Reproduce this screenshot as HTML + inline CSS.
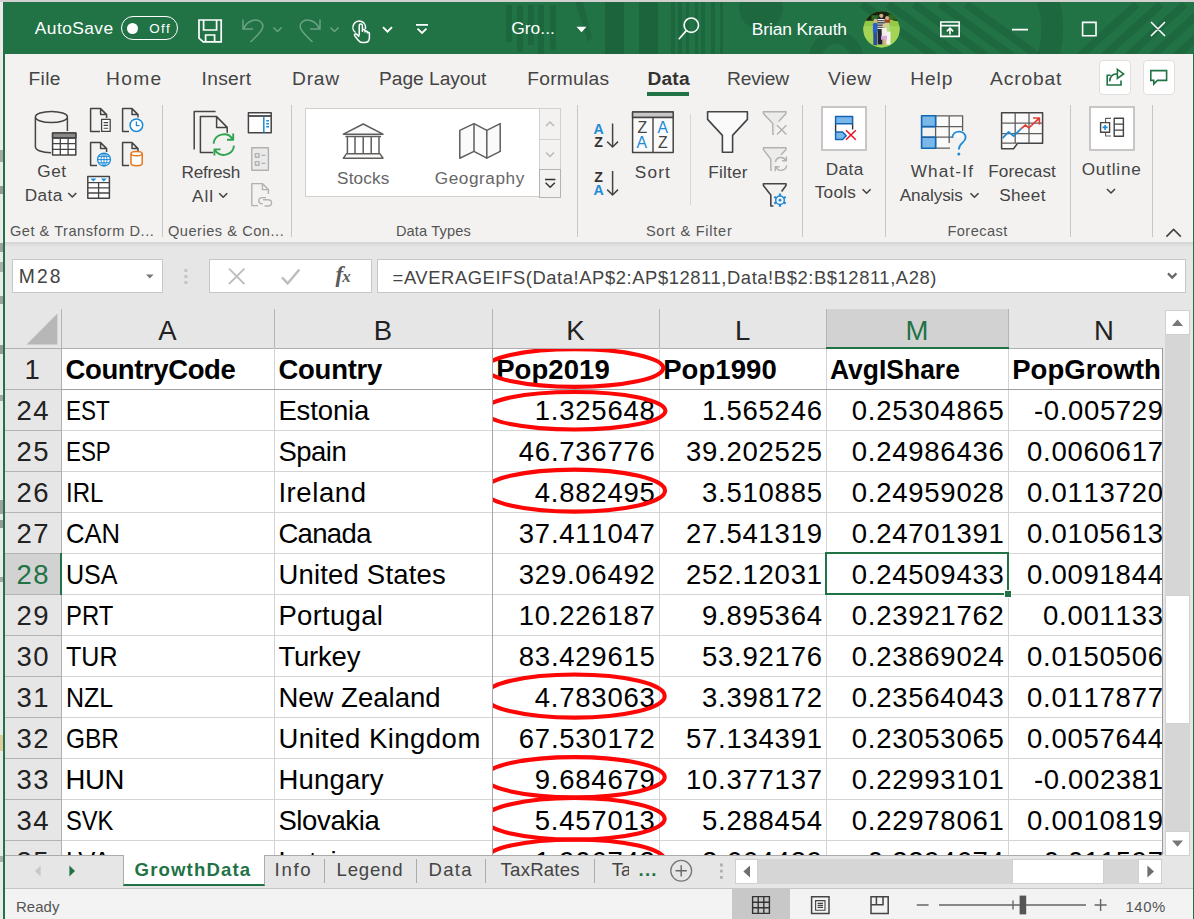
<!DOCTYPE html>
<html lang="en">
<head>
<meta charset="utf-8">
<title>GrowthData - Excel</title>
<style>
html,body{margin:0;padding:0;}
body{width:1194px;height:919px;overflow:hidden;position:relative;background:#e6e6e6;font-family:"Liberation Sans",sans-serif;}
.a{position:absolute;}
.t{position:absolute;white-space:nowrap;line-height:1;}
svg{position:absolute;overflow:visible;}
.sep{position:absolute;width:1px;background:#c8c6c4;}
.hl{position:absolute;height:1px;background:#d4d4d4;}
.vl{position:absolute;width:1px;background:#d4d4d4;}

</style>
</head>
<body>
<div class="a" style="left:0;top:0;width:1194px;height:919px;background:#ebebeb"></div>
<div class="a" style="left:0;top:0;width:1194px;height:2px;background:#d2d0d0"></div>
<div class="a" style="left:0;top:150px;width:3px;height:12px;background:#555;opacity:.45"></div>
<div class="a" style="left:0;top:186px;width:3px;height:8px;background:#333;opacity:.45"></div>
<div class="a" style="left:0;top:243px;width:3px;height:9px;background:#444;opacity:.45"></div>
<div class="a" style="left:0;top:262px;width:3px;height:10px;background:#666;opacity:.45"></div>
<div class="a" style="left:0;top:296px;width:3px;height:8px;background:#444;opacity:.45"></div>
<div class="a" style="left:0;top:345px;width:3px;height:9px;background:#333;opacity:.45"></div>
<div class="a" style="left:0;top:395px;width:3px;height:6px;background:#555;opacity:.45"></div>
<div class="a" style="left:0;top:500px;width:3px;height:14px;background:#444;opacity:.45"></div>
<div class="a" style="left:0;top:520px;width:3px;height:8px;background:#333;opacity:.45"></div>
<div class="a" style="left:0;top:577px;width:3px;height:5px;background:#555;opacity:.45"></div>
<div class="a" style="left:0;top:735px;width:3px;height:16px;background:#d9a441;opacity:.45"></div>
<div class="a" style="left:0;top:856px;width:3px;height:6px;background:#666;opacity:.45"></div>
<div class="a" style="left:3px;top:2px;width:1191px;height:917px;background:#217346"></div>
<div class="a" id="titlebar" style="left:4px;top:2px;width:1190px;height:52px;background:#217346;overflow:hidden">
<div class="a" style="left:502px;top:3px;width:6px;height:37px;background:rgba(0,0,0,0.10)"></div>
<div class="a" style="left:513px;top:3px;width:6px;height:47px;background:rgba(0,0,0,0.10)"></div>
<div class="a" style="left:524px;top:3px;width:6px;height:40px;background:rgba(0,0,0,0.10)"></div>
<div class="a" style="left:534px;top:3px;width:6px;height:49px;background:rgba(0,0,0,0.10)"></div>
<div class="a" style="left:546px;top:3px;width:6px;height:45px;background:rgba(0,0,0,0.10)"></div>
<div class="a" style="left:601px;top:-2px;width:19px;height:54px;background:rgba(0,0,0,0.13)"></div>
<div class="a" style="left:635px;top:-2px;width:19px;height:54px;background:rgba(0,0,0,0.13)"></div>
<div class="a" style="left:667px;top:-2px;width:4px;height:54px;background:rgba(0,0,0,0.10)"></div>
<div class="a" style="left:674px;top:-2px;width:4px;height:54px;background:rgba(0,0,0,0.10)"></div>
<div class="a" style="left:682px;top:-2px;width:3px;height:54px;background:rgba(0,0,0,0.10)"></div>
<div class="a" style="left:691px;top:-2px;width:3px;height:54px;background:rgba(0,0,0,0.10)"></div>
<div class="a" style="left:697px;top:-2px;width:4px;height:54px;background:rgba(0,0,0,0.10)"></div>
<div class="a" style="left:707px;top:-2px;width:4px;height:54px;background:rgba(0,0,0,0.10)"></div>
<div class="a" style="left:716px;top:-2px;width:3px;height:54px;background:rgba(0,0,0,0.10)"></div>
<svg width="1194" height="60" style="left:-4px;top:-2px" fill="none" stroke="rgba(0,0,0,0.09)">
<path d="M575,2 L583,2 L592,38 L588,42 Z" fill="rgba(0,0,0,0.09)" stroke="none"/>
<circle cx="761" cy="8" r="22" fill="rgba(0,0,0,0.09)" stroke="none"/>
<circle cx="836" cy="58" r="20.5" stroke-width="13"/>
<path d="M862,4 L934,56" stroke-width="8"/>
<path d="M888,4 L960,56" stroke-width="8"/>
<path d="M914,4 L986,56" stroke-width="8"/>
<path d="M940,4 L1012,56" stroke-width="8"/>
<path d="M966,4 L1038,56" stroke-width="8"/>
<path d="M1034,-26 A92,92 0 0 1 1034,84" stroke-width="22"/>
<path d="M1080,56 L1137,4" stroke-width="8"/>
<path d="M1104,56 L1161,4" stroke-width="8"/>
<path d="M1128,56 L1185,4" stroke-width="8"/>
<path d="M1152,56 L1209,4" stroke-width="8"/>
<path d="M1176,56 L1233,4" stroke-width="8"/>
<path d="M1200,56 L1257,4" stroke-width="8"/>
</svg>
</div>
<div class="t" style="left:34.8px;top:20.0px;font-size:17.4px;color:#fff;letter-spacing:0.41px;">AutoSave</div>
<div class="a" style="left:121px;top:16px;width:55px;height:22px;border:1px solid #fff;border-radius:12px"></div>
<div class="a" style="left:127px;top:23px;width:11px;height:11px;border-radius:6px;background:#fff"></div>
<div class="t" style="left:149.2px;top:21.5px;font-size:13.4px;color:#fff;letter-spacing:1.51px;">Off</div>
<div class="t" style="left:511.2px;top:19.9px;font-size:17.4px;color:#fff;letter-spacing:0.03px;">Gro...</div>
<div class="t" style="left:751.8px;top:21.1px;font-size:17.4px;color:#fff;letter-spacing:-0.13px;">Brian Krauth</div>
<div class="a" style="left:5px;top:54px;width:1188px;height:188px;background:#f3f2f1"></div>
<div class="a" style="left:5px;top:242px;width:1188px;height:5px;background:linear-gradient(#d2d2d2,#e6e6e6)"></div>
<div class="t" style="left:28.6px;top:68.8px;font-size:19.2px;color:#444;letter-spacing:0.29px;">File</div>
<div class="t" style="left:106.1px;top:68.8px;font-size:19.2px;color:#444;letter-spacing:1.27px;">Home</div>
<div class="t" style="left:201.6px;top:68.8px;font-size:19.2px;color:#444;letter-spacing:0.30px;">Insert</div>
<div class="t" style="left:292.1px;top:68.8px;font-size:19.2px;color:#444;letter-spacing:0.74px;">Draw</div>
<div class="t" style="left:379.0px;top:68.8px;font-size:19.2px;color:#444;letter-spacing:-0.03px;">Page Layout</div>
<div class="t" style="left:527.2px;top:68.8px;font-size:19.2px;color:#444;letter-spacing:0.28px;">Formulas</div>
<div class="t" style="left:727.0px;top:68.8px;font-size:19.2px;color:#444;letter-spacing:-0.17px;">Review</div>
<div class="t" style="left:828.0px;top:68.8px;font-size:19.2px;color:#444;letter-spacing:0.62px;">View</div>
<div class="t" style="left:910.2px;top:68.8px;font-size:19.2px;color:#444;letter-spacing:0.91px;">Help</div>
<div class="t" style="left:990.1px;top:68.8px;font-size:19.2px;color:#444;letter-spacing:0.86px;">Acrobat</div>
<div class="t" style="left:647.4px;top:68.8px;font-size:19.2px;color:#333;font-weight:700;letter-spacing:0.20px;">Data</div>
<div class="a" style="left:647px;top:92px;width:42px;height:4px;background:#217346"></div>
<svg width="1194" height="919" style="left:0;top:0" fill="none" stroke="#fff" stroke-width="1.7">
<path d="M199,20 H221.2 V41.8 H203.2 L199,38.2 Z M203.6,20 V30 H216.6 V20 M205.6,41.8 V35 H214.6 V41.8"/>
<g stroke="#6aa384" stroke-width="1.5"><path d="M243,19.5 V29 H253 M243.6,28.6 C247,21 256,17.5 261,22 C265.5,26.5 262,31 250.5,42"/><path d="M273.5,27.5 L277.5,31.5 L281.5,27.5"/>
<path d="M320,19.5 V29 H310 M319.4,28.6 C316,21 307,17.5 302,22 C297.5,26.5 301,31 312.5,42"/><path d="M330.5,27.5 L334.5,31.5 L338.5,27.5"/></g>
<path d="M355.5,32.5 A6.3,6.3 0 1 1 365.3,29 M359.2,35.5 V25.6 A1.6,1.6 0 0 1 362.4,25.6 V32 M362.4,30.2 A1.4,1.4 0 0 1 365,30.6 V32.6 M365,31.4 A1.4,1.4 0 0 1 367.4,32 V33.4 M367.4,32.6 A1.3,1.3 0 0 1 369.4,33.4 V37.5 C369.4,40.5 367.5,42.6 364.5,42.6 H362.6 C360.5,42.6 359.3,41.8 358,40 L354.6,35.6 C354,34.4 355.6,33.2 356.8,34.4 L359.2,36.8" stroke-width="1.5"/>
<path d="M383,27.2 L387.5,31.7 L392,27.2" stroke-width="1.8"/>
<path d="M416,24.8 H428 M417.5,28.6 L422,33 L426.5,28.6" stroke-width="1.8"/>
<path d="M576.5,26.8 H586.5 L581.5,32.2 Z" fill="#fff" stroke="none"/>
<circle cx="691.3" cy="25.2" r="7.2" stroke-width="1.6"/><path d="M686.3,30.6 L678.8,39.2" stroke-width="1.6"/>
<path d="M940.8,22 H959.2 V36.4 H940.8 Z M940.8,25.6 H959.2 M950,34.4 V28.6 M946.8,31.4 L950,28.2 L953.2,31.4" stroke-width="1.6"/>
<path d="M1012,29.6 H1028 M1082.6,22.4 H1096 V35.8 H1082.6 Z M1151,22 L1165,36 M1165,22 L1151,36" stroke-width="1.6"/>
</svg>
<svg width="37" height="37" viewBox="862.5 10.8 37 37" style="left:862.5px;top:10.8px">
<defs><clipPath id="avc"><circle cx="881" cy="29.1" r="18.1"/></clipPath></defs>
<g clip-path="url(#avc)">
<rect x="862" y="10" width="38" height="38" fill="#93c947"/>
<rect x="862" y="26" width="38" height="22" fill="#a3d455"/>
<path d="M862,10 H900 V21.5 L893,20.4 L889,18 L872,20.6 H862 Z" fill="#16240f"/>
<path d="M871,15 h7 v4.6 h-7 z M888,14 h8 v5.5 h-8 z" fill="#2f6b22"/>
<rect x="872.4" y="22.8" width="4.8" height="10.5" rx="1.5" fill="#2b5fd0"/><rect x="872.8" y="32.5" width="4" height="12.5" fill="#2f4d9a"/><circle cx="875" cy="20.6" r="2" fill="#d9b08c"/>
<rect x="877" y="17.6" width="7" height="13" fill="#20242c"/><path d="M877,19.4 h7 M877,21.6 h7 M877,23.8 h7 M877,26 h7 M877,28.2 h7" stroke="#f2f2f2" stroke-width="1.1"/><rect x="877.4" y="30.4" width="5.6" height="13.8" fill="#1c2233"/><circle cx="880.8" cy="15.6" r="2.1" fill="#d8a98a"/>
<rect x="884.4" y="18.4" width="5" height="6" fill="#a4402c"/><circle cx="886.6" cy="17.8" r="2" fill="#d9a98c"/><rect x="884.6" y="22.6" width="4.6" height="9" fill="#b5dc8a"/><rect x="885" y="31.4" width="5" height="13" fill="#f4f4f4"/>
<rect x="881.2" y="27.2" width="5.2" height="9.4" rx="1.5" fill="#f3efe8"/><rect x="880.6" y="35.6" width="5.8" height="4" fill="#dfa6dc"/><circle cx="884" cy="25.4" r="2" fill="#e6c890"/><rect x="881.8" y="39.4" width="1.6" height="5.4" fill="#d8b08c"/><rect x="884.2" y="39.4" width="1.6" height="5.4" fill="#d8b08c"/>
</g></svg>
<div class="a" style="left:1099px;top:60px;width:30px;height:33px;background:#fff;border:1px solid #e1dfdd;border-radius:4px"></div>
<div class="a" style="left:1143px;top:60px;width:30px;height:33px;background:#fff;border:1px solid #e1dfdd;border-radius:4px"></div>
<svg width="1194" height="919" style="left:0;top:0" fill="none" stroke="#217346" stroke-width="1.6">
<path d="M1110.6,75.2 H1107.2 V85 H1121 V80.6 M1109.6,81.4 C1110,76.6 1113,73.8 1117.4,73.8 M1117.4,69.4 L1123.6,73.9 L1117.4,78.4 Z"/>
<path d="M1150.8,70.6 H1166.6 V80.4 H1157.4 L1153.8,84 V80.4 H1150.8 Z"/>
</svg>
<div class="sep" style="left:162px;top:105px;height:132px"></div>
<div class="sep" style="left:291px;top:105px;height:132px"></div>
<div class="sep" style="left:577px;top:105px;height:132px"></div>
<div class="sep" style="left:802px;top:105px;height:132px"></div>
<div class="sep" style="left:885px;top:105px;height:132px"></div>
<div class="sep" style="left:1070px;top:105px;height:132px"></div>
<div class="sep" style="left:1152px;top:105px;height:132px"></div>
<div class="sep" style="left:690px;top:114px;height:91px;background:#d8d6d4"></div>
<div class="t" style="left:9.9px;top:224.4px;font-size:14.6px;color:#555;letter-spacing:0.53px;">Get &amp; Transform D...</div>
<div class="t" style="left:167.9px;top:224.4px;font-size:14.6px;color:#555;letter-spacing:0.53px;">Queries &amp; Con...</div>
<div class="t" style="left:395.9px;top:224.4px;font-size:14.6px;color:#555;letter-spacing:0.15px;">Data Types</div>
<div class="t" style="left:645.9px;top:224.4px;font-size:14.6px;color:#555;letter-spacing:0.74px;">Sort &amp; Filter</div>
<div class="t" style="left:947.4px;top:224.4px;font-size:14.6px;color:#555;letter-spacing:0.45px;">Forecast</div>
<div class="a" style="left:305px;top:108px;width:256px;height:89px;background:#fff;border:1px solid #d2d0ce;box-sizing:border-box"></div>
<div class="a" style="left:539px;top:108px;width:22px;height:32px;background:#f3f2f1;border:1px solid #d2d0ce;box-sizing:border-box"></div>
<div class="a" style="left:539px;top:139px;width:22px;height:31px;background:#f3f2f1;border:1px solid #d2d0ce;box-sizing:border-box"></div>
<div class="a" style="left:539px;top:169px;width:22px;height:29px;background:#f3f2f1;border:1px solid #b5b3b1;box-sizing:border-box"></div>
<div class="a" style="left:821px;top:106px;width:46px;height:45px;background:#fff;border:2px solid #c8c6c4;box-sizing:border-box"></div>
<div class="a" style="left:1089px;top:106px;width:46px;height:45px;background:#fff;border:2px solid #c8c6c4;box-sizing:border-box"></div>
<div class="t" style="left:37.3px;top:163.0px;font-size:17.2px;color:#444;letter-spacing:0.47px;">Get</div>
<div class="t" style="left:24.7px;top:187.2px;font-size:17.2px;color:#444;letter-spacing:0.44px;">Data</div>
<div class="t" style="left:181.6px;top:163.8px;font-size:17.2px;color:#444;letter-spacing:-0.26px;">Refresh</div>
<div class="t" style="left:192.0px;top:187.8px;font-size:17.2px;color:#444;letter-spacing:1.01px;">All</div>
<div class="t" style="left:337.1px;top:169.5px;font-size:17.2px;color:#666;letter-spacing:0.11px;">Stocks</div>
<div class="t" style="left:434.8px;top:169.5px;font-size:17.2px;color:#666;letter-spacing:0.56px;">Geography</div>
<div class="t" style="left:634.7px;top:163.6px;font-size:17.2px;color:#444;letter-spacing:1.23px;">Sort</div>
<div class="t" style="left:708.2px;top:163.6px;font-size:17.2px;color:#444;letter-spacing:0.21px;">Filter</div>
<div class="t" style="left:825.7px;top:160.6px;font-size:17.2px;color:#444;letter-spacing:0.47px;">Data</div>
<div class="t" style="left:814.7px;top:184.4px;font-size:17.2px;color:#444;letter-spacing:0.28px;">Tools</div>
<div class="t" style="left:910.7px;top:162.9px;font-size:17.2px;color:#444;letter-spacing:1.14px;">What-If</div>
<div class="t" style="left:899.7px;top:187.0px;font-size:17.2px;color:#444;letter-spacing:-0.11px;">Analysis</div>
<div class="t" style="left:988.2px;top:162.9px;font-size:17.2px;color:#444;letter-spacing:0.12px;">Forecast</div>
<div class="t" style="left:999.2px;top:187.0px;font-size:17.2px;color:#444;letter-spacing:0.33px;">Sheet</div>
<div class="t" style="left:1081.7px;top:160.6px;font-size:17.2px;color:#444;letter-spacing:0.79px;">Outline</div>
<svg width="1194" height="919" style="left:0;top:0" fill="none" stroke="#444" stroke-width="1.5" stroke-linejoin="round">
<path d="M68.3,193.0 L72.3,197.0 L76.3,193.0" stroke="#444" stroke-width="1.6"/>
<path d="M219.2,193.2 L223.2,197.2 L227.2,193.2" stroke="#444" stroke-width="1.6"/>
<path d="M862.6,189.2 L866.6,193.2 L870.6,189.2" stroke="#444" stroke-width="1.6"/>
<path d="M970.5,193.2 L974.5,197.2 L978.5,193.2" stroke="#444" stroke-width="1.6"/>
<path d="M1107.0,189.0 L1111.0,193.0 L1115.0,189.0" stroke="#444" stroke-width="1.6"/>
<path d="M35.4,117 A16,5.6 0 0 1 67.4,117 A16,5.6 0 0 1 35.4,117 M35.4,117 V147 C35.4,150 42,152.6 51,152.8 M67.4,117 V131"/>
<rect x="52.6" y="133" width="23.2" height="22" fill="#fff"/><rect x="52.6" y="133" width="23.2" height="5" fill="#8a8886"/>
<path d="M52.6,138 H75.8 M52.6,143.7 H75.8 M52.6,149.4 H75.8 M60.3,138 V155 M68.1,138 V155" stroke-width="1.3"/>
<path d="M100.0,131.6 H90.6 V108.6 H100.6 L106.6,114.6 V118.0 M100.6,108.6 V114.6 H106.6" stroke="#444"/>
<rect x="101.6" y="119.4" width="8.6" height="12" fill="#fff" stroke-width="1.3"/><path d="M103.6,122.6 H108.2 M103.6,125.4 H108.2 M103.6,128.2 H108.2" stroke-width="1.1"/>
<path d="M129.0,131.6 H122.6 V108.6 H132.0 L138.0,114.6 V117.5 M132.0,108.6 V114.6 H138.0" stroke="#444"/>
<circle cx="136.4" cy="125.2" r="6.3" fill="#fff" stroke="#1e8ad6" stroke-width="1.5"/><path d="M136.4,121.4 V125.6 H139.6" stroke="#1e8ad6" stroke-width="1.3"/>
<path d="M97.0,165.6 H90.6 V142.6 H100.6 L106.6,148.6 V152.0 M100.6,142.6 V148.6 H106.6" stroke="#444"/>
<circle cx="104" cy="159.6" r="6.4" fill="#fff" stroke="#1e8ad6" stroke-width="1.4"/><path d="M97.6,159.6 H110.4 M104,153.2 V166 M104,153.2 C100,156.5 100,162.8 104,166 M104,153.2 C108,156.5 108,162.8 104,166 M98.6,156.4 H109.4 M98.6,162.8 H109.4" stroke="#1e8ad6" stroke-width="1"/>
<path d="M129.0,165.6 H122.6 V142.6 H132.0 L138.0,148.6 V152.0 M132.0,142.6 V148.6 H138.0" stroke="#444"/>
<path d="M131,153.6 A5.6,2.2 0 0 1 142.2,153.6 V163.6 A5.6,2.2 0 0 1 131,163.6 Z" fill="#fff" stroke="#e3771d" stroke-width="1.5"/><path d="M131,153.6 A5.6,2.2 0 0 0 142.2,153.6" stroke="#e3771d" stroke-width="1.4"/>
<rect x="87.8" y="176.6" width="21.6" height="21.6" fill="#fff"/><path d="M87.8,182.6 H109.4 M87.8,187.8 H109.4 M87.8,193 H109.4 M98.6,182.6 V198.2" stroke-width="1.3"/>
<path d="M90.4,178.4 H96.4 L93.4,181.4 Z M100.8,178.4 H106.8 L103.8,181.4 Z" fill="#1e8ad6" stroke="none"/>
<path d="M194.2,149.6 V111.4 H215.6"/>
<path d="M213,152.6 H200.4 V116.6 H216.6 L227.2,127.4 V133 M216.6,116.6 V127.4 H227.2"/>
<circle cx="223.8" cy="144.6" r="12.4" fill="#f3f2f1" stroke="none"/>
<path d="M213.6,143.6 A10.3,10.3 0 0 1 232.6,139.2 M234,145.6 A10.3,10.3 0 0 1 215,150 M233.2,133.6 V139.8 H227 M214.4,155.6 V149.4 H220.6" stroke="#2ea44f" stroke-width="1.9"/>
<rect x="248.4" y="112.8" width="22.8" height="20" fill="#fff"/><path d="M248.4,116 H271.2" stroke-width="1.8"/><path d="M263.8,116.6 V132.4" stroke="#1e8ad6" stroke-width="1.5"/><path d="M266.2,120.8 H269 M266.2,123.8 H269 M266.2,126.8 H269" stroke="#1e8ad6" stroke-width="1.5"/>
<g stroke="#b3b1af" stroke-width="1.4"><rect x="251.8" y="147.8" width="16.6" height="22.4" fill="#eaeaea"/><rect x="255.4" y="153.6" width="3.6" height="3.6"/><rect x="255.4" y="161.6" width="3.6" height="3.6"/><path d="M261.4,155.4 H265.4 M261.4,163.4 H265.4"/></g>
<g stroke="#b3b1af" stroke-width="1.4"><path d="M258,205.6 H251.8 V183.6 H262.4 L268.4,189.6 V194 M262.4,183.6 V189.6 H268.4"/><path d="M262.6,203.8 C257.6,203.8 257.6,197.6 262.6,197.6 H266 M267.6,199.8 H263 M264.6,206 H267.8 C272.8,206 272.8,199.8 267.8,199.8" /></g>
</svg>
<svg width="1194" height="919" style="left:0;top:0" fill="none" stroke="#444" stroke-width="1.5" stroke-linejoin="round">
<g stroke="#605e5c"><path d="M343.4,134.2 L363.2,124 L383,134.2 Z M345.4,136.6 H381 M347.4,136.6 V153.8 M355,136.6 V153.8 M363.2,136.6 V153.8 M371.2,136.6 V153.8 M379,136.6 V153.8 M346.4,153.8 H380 L383,158.2 H343.4 Z" fill="#fafafa"/></g>
<g stroke="#605e5c"><path d="M459.8,130.4 L474,123.6 L486.8,130.4 L500.2,123.6 V151.4 L486.8,158.2 L474,151.4 L459.8,158.2 Z" fill="#fafafa"/><path d="M474,123.6 V151.4 M486.8,130.4 V158.2"/></g>
<path d="M546,126 L550,122 L554,126 M546,152.6 L550,156.6 L554,152.6" stroke="#b8b6b4" stroke-width="1.4"/>
<path d="M545,179.4 H555.4 M545.6,182.8 L550.2,187.2 L554.8,182.8" stroke="#333" stroke-width="1.5"/>
<path d="M612.6,123.6 V147 M607.2,141.6 L612.6,147 L618,141.6 M612.6,171 V195 M607.2,189.6 L612.6,195 L618,189.6" stroke-width="1.5"/>
<rect x="632.6" y="112" width="40.6" height="40.4" fill="#fafafa"/><rect x="632.6" y="112" width="40.6" height="5.4" fill="#c8c6c4"/><path d="M653,117.4 V152.4 M632.6,117.4 H673.2" stroke-width="1.4"/>
<path d="M707.6,111.8 H747.4 V119.4 L732.6,135.4 V152.2 H722.4 V135.4 L707.6,119.4 Z" fill="#fafafa" stroke-width="1.6"/>
<g stroke="#b3b1af" stroke-width="1.4"><path d="M774,134.2 H772.8 V123.4 L763.4,113.6 V111.8 H786 V113.6 L778.6,121.4" fill="#ececeb"/><path d="M777,125.2 L786.4,134.4 M786.4,125.2 L777,134.4"/></g>
<g stroke="#b3b1af" stroke-width="1.4"><path d="M772,170 H770.8 V159.2 L763.4,149.6 V147.8 H786 V149.6 L781,155" fill="#ececeb"/><path d="M775.4,162 A5.6,5.6 0 0 1 785.8,160.4 M786.6,165.4 A5.6,5.6 0 0 1 776,167.2 M786.4,156.4 V160.8 H782 M775.2,171.2 V166.8 H779.6"/></g>
<path d="M773.4,206 H770.8 V195 L763.4,185.6 V183.8 H786 V185.6 L781.6,191.4" stroke-width="1.6"/>
<g stroke="#1e8ad6" stroke-width="1.5"><circle cx="780" cy="200.2" r="4.3"/><path d="M780,193.6 V195.8 M780,204.6 V206.8 M774.3,196.9 L776.2,198 M783.8,202.4 L785.7,203.5 M774.3,203.5 L776.2,202.4 M783.8,198 L785.7,196.9" stroke-width="2.2"/><circle cx="780" cy="200.2" r="1.4" fill="#1e8ad6" stroke="none"/></g>
<path d="M835.6,123.8 V132 M852.6,123.8 V129.4" stroke="#333" stroke-width="1.4"/>
<rect x="835.6" y="116.4" width="17" height="7.4" fill="#7ab8ea" stroke="#1464b4" stroke-width="1.5"/>
<path d="M835.6,132 H842.6 L846.2,135.7 L842.6,139.4 H835.6 Z" fill="#7ab8ea" stroke="#1464b4" stroke-width="1.5"/>
<path d="M846,130.2 L855.8,139.8 M855.8,130.2 L846,139.8" stroke="#e81123" stroke-width="1.5"/>
<path d="M935.6,115.8 H962.6 V137.2 H949.2 V148.2 H935.6 Z" fill="#fafafa" stroke="none"/>
<path d="M935.6,115.8 H962.6 V131 M921.6,126.6 H962.6 M921.6,137.2 H953 M935.6,148.2 H950 M935.6,115.8 V148.2 M949.2,115.8 V143" stroke="#605e5c" stroke-width="1.3" fill="none"/>
<path d="M921.6,126.6 V137.2" stroke="#1464b4" stroke-width="1.6"/>
<rect x="921.6" y="115.8" width="14" height="10.8" fill="#7ab8ea" stroke="#1464b4" stroke-width="1.6"/><rect x="921.6" y="137.2" width="14" height="11" fill="#7ab8ea" stroke="#1464b4" stroke-width="1.6"/>
<path d="M952.4,138 C952.4,129.6 965.6,129.8 965.6,137.4 C965.6,142.8 958.8,142.6 958.8,149.6" stroke="#1e8ad6" stroke-width="1.8"/><circle cx="958.8" cy="154" r="1.5" fill="#1e8ad6" stroke="none"/>
<path d="M1001.6,112.8 H1042.6 V143.2 H1017.6 L1013.6,148.8 H1001.6 Z" fill="#fafafa" stroke-width="1.5"/><path d="M1001.6,123.2 H1042.6 M1001.6,133.6 H1042.6 M1001.6,143.2 H1017.6 M1015.2,112.8 V143.2 M1029,112.8 V143.2" stroke="#605e5c" stroke-width="1.3"/>
<path d="M1002.6,138.2 L1008.6,131.8 L1013.6,136.2 L1021.2,128.6" stroke="#1e8ad6" stroke-width="1.7"/>
<path d="M1021.2,128.6 L1025.6,125 L1028.8,128 L1039,118.4 M1033,118 H1039.4 V124.4" stroke="#e03c32" stroke-width="1.7"/>
<path d="M1111,118.4 H1105.6 V122.4 M1105.6,132.4 V136 H1111" stroke="#605e5c" stroke-width="1.1"/>
<rect x="1100.6" y="122.6" width="9" height="9.6" fill="#fff" stroke-width="1.4"/><path d="M1102.6,127.4 H1107.6 M1105.1,124.9 V129.9" stroke="#1e8ad6" stroke-width="1.6"/>
<rect x="1114.2" y="118.2" width="9.2" height="18" fill="#fff" stroke-width="1.4"/><path d="M1114.2,124.2 H1123.4 M1114.2,130.2 H1123.4" stroke-width="1.3"/>
<path d="M1166.4,236.6 L1173.6,229.4 L1180.8,236.6" stroke-width="1.6"/>
</svg>
<div class="t" style="left:593.6px;top:121.7px;font-size:14.2px;font-weight:700;color:#1e8ad6">A</div>
<div class="t" style="left:594.2px;top:134.7px;font-size:14.2px;font-weight:700;color:#333">Z</div>
<div class="t" style="left:594.2px;top:169.5px;font-size:14.2px;font-weight:700;color:#333">Z</div>
<div class="t" style="left:593.6px;top:183.1px;font-size:14.2px;font-weight:700;color:#1e8ad6">A</div>
<div class="t" style="left:637.6px;top:119.9px;font-size:15.8px;font-weight:400;color:#444">Z</div>
<div class="t" style="left:636.4px;top:135.3px;font-size:15.8px;font-weight:400;color:#1e8ad6">A</div>
<div class="t" style="left:657.4px;top:119.9px;font-size:15.8px;font-weight:400;color:#1e8ad6">A</div>
<div class="t" style="left:658.0px;top:135.3px;font-size:15.8px;font-weight:400;color:#444">Z</div>
<div class="a" style="left:5px;top:247px;width:1188px;height:642px;background:#e6e6e6"></div>
<div class="a" style="left:12px;top:259px;width:151px;height:34px;background:#fff;border:1px solid #c6c6c6;box-sizing:border-box"></div>
<div class="t" style="left:18.7px;top:267.4px;font-size:19.3px;color:#444;letter-spacing:2.20px;">M28</div>
<div class="a" style="left:209px;top:259px;width:163px;height:34px;background:#fff;border:1px solid #c6c6c6;box-sizing:border-box"></div>
<div class="a" style="left:377px;top:259px;width:809px;height:34px;background:#fff;border:1px solid #c6c6c6;box-sizing:border-box"></div>
<div class="t" style="left:392.6px;top:268.6px;font-size:18.4px;color:#444;letter-spacing:0.57px;">=AVERAGEIFS(Data!AP$2:AP$12811,Data!B$2:B$12811,A28)</div>
<svg width="1194" height="919" style="left:0;top:0" fill="none" stroke="#bdbdbd" stroke-width="1.8">
<path d="M146,274.4 H153.6 L149.8,278.6 Z" fill="#777" stroke="none"/>
<path d="M184.4,269 h3 v3 h-3 z M184.4,275 h3 v3 h-3 z M184.4,281 h3 v3 h-3 z" fill="#c4c4c4" stroke="none"/>
<path d="M229,268.6 L244.4,284 M244.4,268.6 L229,284"/>
<path d="M282,277.4 L287.6,283.4 L299.4,269.4" stroke-width="2.4"/>
<path d="M1168,273.4 L1172.2,277.6 L1176.4,273.4" stroke="#666" stroke-width="2.2"/>
</svg>
<div class="t" style="left:335.5px;top:263px;font-size:23px;font-style:italic;font-weight:700;font-family:&quot;Liberation Serif&quot;,serif;color:#5a5a5a;letter-spacing:-1px"><i>f</i><span style="font-size:17px">x</span></div>
<div class="a" id="cells" style="left:61px;top:348px;width:1101px;height:508px;background:#fff;overflow:hidden">
</div>
<div class="a" style="left:826px;top:309px;width:183px;height:39px;background:#d2d2d2"></div>
<div class="a" style="left:5px;top:553px;width:56px;height:41px;background:#d2d2d2"></div>
<div class="hl" style="left:5px;top:348px;width:1157px;background:#b0b0b0"></div>
<div class="hl" style="left:5px;top:389px;width:1157px;background:#a6a6a6"></div>
<div class="hl" style="left:5px;top:389px;width:56px;background:#b4b4b4"></div>
<div class="hl" style="left:5px;top:430px;width:1157px;background:#d4d4d4"></div>
<div class="hl" style="left:5px;top:430px;width:56px;background:#b4b4b4"></div>
<div class="hl" style="left:5px;top:471px;width:1157px;background:#d4d4d4"></div>
<div class="hl" style="left:5px;top:471px;width:56px;background:#b4b4b4"></div>
<div class="hl" style="left:5px;top:512px;width:1157px;background:#d4d4d4"></div>
<div class="hl" style="left:5px;top:512px;width:56px;background:#b4b4b4"></div>
<div class="hl" style="left:5px;top:553px;width:1157px;background:#d4d4d4"></div>
<div class="hl" style="left:5px;top:553px;width:56px;background:#b4b4b4"></div>
<div class="hl" style="left:5px;top:594px;width:1157px;background:#d4d4d4"></div>
<div class="hl" style="left:5px;top:594px;width:56px;background:#b4b4b4"></div>
<div class="hl" style="left:5px;top:635px;width:1157px;background:#d4d4d4"></div>
<div class="hl" style="left:5px;top:635px;width:56px;background:#b4b4b4"></div>
<div class="hl" style="left:5px;top:676px;width:1157px;background:#d4d4d4"></div>
<div class="hl" style="left:5px;top:676px;width:56px;background:#b4b4b4"></div>
<div class="hl" style="left:5px;top:717px;width:1157px;background:#d4d4d4"></div>
<div class="hl" style="left:5px;top:717px;width:56px;background:#b4b4b4"></div>
<div class="hl" style="left:5px;top:758px;width:1157px;background:#d4d4d4"></div>
<div class="hl" style="left:5px;top:758px;width:56px;background:#b4b4b4"></div>
<div class="hl" style="left:5px;top:799px;width:1157px;background:#d4d4d4"></div>
<div class="hl" style="left:5px;top:799px;width:56px;background:#b4b4b4"></div>
<div class="hl" style="left:5px;top:840px;width:1157px;background:#d4d4d4"></div>
<div class="hl" style="left:5px;top:840px;width:56px;background:#b4b4b4"></div>
<div class="vl" style="left:61px;top:348px;height:507px;background:#b0b0b0"></div>
<div class="vl" style="left:61px;top:309px;height:39px;background:#b4b4b4"></div>
<div class="vl" style="left:274px;top:348px;height:507px;background:#d4d4d4"></div>
<div class="vl" style="left:274px;top:309px;height:39px;background:#b4b4b4"></div>
<div class="vl" style="left:492px;top:348px;height:507px;background:#a6a6a6"></div>
<div class="vl" style="left:492px;top:309px;height:39px;background:#b4b4b4"></div>
<div class="vl" style="left:659px;top:348px;height:507px;background:#d4d4d4"></div>
<div class="vl" style="left:659px;top:309px;height:39px;background:#b4b4b4"></div>
<div class="vl" style="left:826px;top:348px;height:507px;background:#d4d4d4"></div>
<div class="vl" style="left:826px;top:309px;height:39px;background:#b4b4b4"></div>
<div class="vl" style="left:1008px;top:348px;height:507px;background:#d4d4d4"></div>
<div class="vl" style="left:1008px;top:309px;height:39px;background:#b4b4b4"></div>
<div class="vl" style="left:1162px;top:348px;height:507px;background:#9a9a9a"></div>
<div class="a" style="left:826px;top:347px;width:183px;height:2px;background:#217346"></div>
<div class="a" style="left:60px;top:553px;width:2px;height:42px;background:#217346"></div>
<svg width="1194" height="919" style="left:0;top:0"><path d="M57.4,313.6 V344.4 H26.6 Z" fill="#b7b7b7"/></svg>
<div class="t" style="left:158.3px;top:316.9px;font-size:27.5px;color:#222;">A</div>
<div class="t" style="left:373.8px;top:316.9px;font-size:27.5px;color:#222;">B</div>
<div class="t" style="left:566.3px;top:316.9px;font-size:27.5px;color:#222;">K</div>
<div class="t" style="left:734.9px;top:316.9px;font-size:27.5px;color:#222;">L</div>
<div class="t" style="left:905.5px;top:316.9px;font-size:27.5px;color:#217346;">M</div>
<div class="t" style="left:1094.1px;top:316.9px;font-size:27.5px;color:#222;">N</div>
<div class="a" style="left:0;top:300px;width:1162px;height:555px;overflow:hidden"><div class="a" style="left:0;top:-300px;width:1194px;height:919px">
<div class="t" style="left:24.6px;top:356.2px;font-size:27.5px;color:#222;">1</div>
<div class="t" style="left:65.6px;top:356.2px;font-size:27.5px;color:#000;font-weight:700;letter-spacing:-0.40px;">CountryCode</div>
<div class="t" style="left:278.4px;top:356.2px;font-size:27.5px;color:#000;font-weight:700;letter-spacing:-0.24px;">Country</div>
<div class="t" style="left:496.2px;top:356.2px;font-size:27.5px;color:#000;font-weight:700;letter-spacing:0.08px;">Pop2019</div>
<div class="t" style="left:663.2px;top:356.2px;font-size:27.5px;color:#000;font-weight:700;letter-spacing:0.08px;">Pop1990</div>
<div class="t" style="left:830.2px;top:356.2px;font-size:27.5px;color:#000;font-weight:700;transform:scaleX(0.962);transform-origin:0 0;">AvgIShare</div>
<div class="t" style="left:1012.2px;top:356.2px;font-size:27.5px;color:#000;font-weight:700;letter-spacing:0.07px;">PopGrowth</div>
<div class="t" style="left:16.6px;top:397.2px;font-size:27.5px;color:#222;letter-spacing:1.41px;">24</div>
<div class="t" style="left:65.6px;top:397.2px;font-size:27.5px;color:#000;transform:scaleX(0.817);transform-origin:0 0;">EST</div>
<div class="t" style="left:278.4px;top:397.2px;font-size:27.5px;color:#000;letter-spacing:-0.12px;">Estonia</div>
<div class="t" style="left:534.8px;top:397.2px;font-size:27.5px;color:#000;letter-spacing:0.76px;font-kerning:none;">1.325648</div>
<div class="t" style="left:702.0px;top:397.2px;font-size:27.5px;color:#000;letter-spacing:0.76px;font-kerning:none;">1.565246</div>
<div class="t" style="left:851.8px;top:397.2px;font-size:27.5px;color:#000;letter-spacing:0.74px;font-kerning:none;">0.25304865</div>
<div class="t" style="left:1034.0px;top:397.2px;font-size:27.5px;color:#000;letter-spacing:0.64px;font-kerning:none;">-0.005729</div>
<div class="t" style="left:16.6px;top:438.2px;font-size:27.5px;color:#222;letter-spacing:1.41px;">25</div>
<div class="t" style="left:65.6px;top:438.2px;font-size:27.5px;color:#000;transform:scaleX(0.814);transform-origin:0 0;">ESP</div>
<div class="t" style="left:278.4px;top:438.2px;font-size:27.5px;color:#000;letter-spacing:-0.50px;">Spain</div>
<div class="t" style="left:518.8px;top:438.2px;font-size:27.5px;color:#000;letter-spacing:0.75px;font-kerning:none;">46.736776</div>
<div class="t" style="left:686.0px;top:438.2px;font-size:27.5px;color:#000;letter-spacing:0.75px;font-kerning:none;">39.202525</div>
<div class="t" style="left:851.8px;top:438.2px;font-size:27.5px;color:#000;letter-spacing:0.74px;font-kerning:none;">0.24986436</div>
<div class="t" style="left:1027.0px;top:438.2px;font-size:27.5px;color:#000;letter-spacing:0.75px;font-kerning:none;">0.0060617</div>
<div class="t" style="left:16.6px;top:479.2px;font-size:27.5px;color:#222;letter-spacing:1.41px;">26</div>
<div class="t" style="left:65.6px;top:479.2px;font-size:27.5px;color:#000;transform:scaleX(0.875);transform-origin:0 0;">IRL</div>
<div class="t" style="left:278.4px;top:479.2px;font-size:27.5px;color:#000;letter-spacing:0.59px;">Ireland</div>
<div class="t" style="left:534.8px;top:479.2px;font-size:27.5px;color:#000;letter-spacing:0.76px;font-kerning:none;">4.882495</div>
<div class="t" style="left:702.0px;top:479.2px;font-size:27.5px;color:#000;letter-spacing:0.76px;font-kerning:none;">3.510885</div>
<div class="t" style="left:851.8px;top:479.2px;font-size:27.5px;color:#000;letter-spacing:0.74px;font-kerning:none;">0.24959028</div>
<div class="t" style="left:1027.0px;top:479.2px;font-size:27.5px;color:#000;letter-spacing:0.75px;font-kerning:none;">0.0113720</div>
<div class="t" style="left:16.6px;top:520.2px;font-size:27.5px;color:#222;letter-spacing:1.41px;">27</div>
<div class="t" style="left:65.6px;top:520.2px;font-size:27.5px;color:#000;transform:scaleX(0.932);transform-origin:0 0;">CAN</div>
<div class="t" style="left:278.4px;top:520.2px;font-size:27.5px;color:#000;letter-spacing:-0.66px;">Canada</div>
<div class="t" style="left:518.8px;top:520.2px;font-size:27.5px;color:#000;letter-spacing:0.75px;font-kerning:none;">37.411047</div>
<div class="t" style="left:686.0px;top:520.2px;font-size:27.5px;color:#000;letter-spacing:0.75px;font-kerning:none;">27.541319</div>
<div class="t" style="left:851.8px;top:520.2px;font-size:27.5px;color:#000;letter-spacing:0.74px;font-kerning:none;">0.24701391</div>
<div class="t" style="left:1027.0px;top:520.2px;font-size:27.5px;color:#000;letter-spacing:0.75px;font-kerning:none;">0.0105613</div>
<div class="t" style="left:16.6px;top:561.2px;font-size:27.5px;color:#217346;letter-spacing:1.41px;">28</div>
<div class="t" style="left:65.6px;top:561.2px;font-size:27.5px;color:#000;transform:scaleX(0.911);transform-origin:0 0;">USA</div>
<div class="t" style="left:278.4px;top:561.2px;font-size:27.5px;color:#000;letter-spacing:0.19px;">United States</div>
<div class="t" style="left:518.8px;top:561.2px;font-size:27.5px;color:#000;letter-spacing:0.75px;font-kerning:none;">329.06492</div>
<div class="t" style="left:686.0px;top:561.2px;font-size:27.5px;color:#000;letter-spacing:0.75px;font-kerning:none;">252.12031</div>
<div class="t" style="left:851.8px;top:561.2px;font-size:27.5px;color:#000;letter-spacing:0.74px;font-kerning:none;">0.24509433</div>
<div class="t" style="left:1027.0px;top:561.2px;font-size:27.5px;color:#000;letter-spacing:0.75px;font-kerning:none;">0.0091844</div>
<div class="t" style="left:16.6px;top:602.2px;font-size:27.5px;color:#222;letter-spacing:1.41px;">29</div>
<div class="t" style="left:65.6px;top:602.2px;font-size:27.5px;color:#000;transform:scaleX(0.868);transform-origin:0 0;">PRT</div>
<div class="t" style="left:278.4px;top:602.2px;font-size:27.5px;color:#000;letter-spacing:0.30px;">Portugal</div>
<div class="t" style="left:518.8px;top:602.2px;font-size:27.5px;color:#000;letter-spacing:0.75px;font-kerning:none;">10.226187</div>
<div class="t" style="left:702.0px;top:602.2px;font-size:27.5px;color:#000;letter-spacing:0.76px;font-kerning:none;">9.895364</div>
<div class="t" style="left:851.8px;top:602.2px;font-size:27.5px;color:#000;letter-spacing:0.74px;font-kerning:none;">0.23921762</div>
<div class="t" style="left:1043.0px;top:602.2px;font-size:27.5px;color:#000;letter-spacing:0.76px;font-kerning:none;">0.001133</div>
<div class="t" style="left:16.6px;top:643.2px;font-size:27.5px;color:#222;letter-spacing:1.41px;">30</div>
<div class="t" style="left:65.6px;top:643.2px;font-size:27.5px;color:#000;transform:scaleX(0.911);transform-origin:0 0;">TUR</div>
<div class="t" style="left:278.4px;top:643.2px;font-size:27.5px;color:#000;letter-spacing:-0.19px;">Turkey</div>
<div class="t" style="left:518.8px;top:643.2px;font-size:27.5px;color:#000;letter-spacing:0.75px;font-kerning:none;">83.429615</div>
<div class="t" style="left:702.0px;top:643.2px;font-size:27.5px;color:#000;letter-spacing:0.76px;font-kerning:none;">53.92176</div>
<div class="t" style="left:851.8px;top:643.2px;font-size:27.5px;color:#000;letter-spacing:0.74px;font-kerning:none;">0.23869024</div>
<div class="t" style="left:1027.0px;top:643.2px;font-size:27.5px;color:#000;letter-spacing:0.75px;font-kerning:none;">0.0150506</div>
<div class="t" style="left:16.6px;top:684.2px;font-size:27.5px;color:#222;letter-spacing:1.41px;">31</div>
<div class="t" style="left:65.6px;top:684.2px;font-size:27.5px;color:#000;transform:scaleX(0.910);transform-origin:0 0;">NZL</div>
<div class="t" style="left:278.4px;top:684.2px;font-size:27.5px;color:#000;letter-spacing:0.02px;">New Zealand</div>
<div class="t" style="left:534.8px;top:684.2px;font-size:27.5px;color:#000;letter-spacing:0.76px;font-kerning:none;">4.783063</div>
<div class="t" style="left:702.0px;top:684.2px;font-size:27.5px;color:#000;letter-spacing:0.76px;font-kerning:none;">3.398172</div>
<div class="t" style="left:851.8px;top:684.2px;font-size:27.5px;color:#000;letter-spacing:0.74px;font-kerning:none;">0.23564043</div>
<div class="t" style="left:1027.0px;top:684.2px;font-size:27.5px;color:#000;letter-spacing:0.75px;font-kerning:none;">0.0117877</div>
<div class="t" style="left:16.6px;top:725.2px;font-size:27.5px;color:#222;letter-spacing:1.41px;">32</div>
<div class="t" style="left:65.6px;top:725.2px;font-size:27.5px;color:#000;transform:scaleX(0.888);transform-origin:0 0;">GBR</div>
<div class="t" style="left:278.4px;top:725.2px;font-size:27.5px;color:#000;letter-spacing:0.48px;">United Kingdom</div>
<div class="t" style="left:518.8px;top:725.2px;font-size:27.5px;color:#000;letter-spacing:0.75px;font-kerning:none;">67.530172</div>
<div class="t" style="left:686.0px;top:725.2px;font-size:27.5px;color:#000;letter-spacing:0.75px;font-kerning:none;">57.134391</div>
<div class="t" style="left:851.8px;top:725.2px;font-size:27.5px;color:#000;letter-spacing:0.74px;font-kerning:none;">0.23053065</div>
<div class="t" style="left:1027.0px;top:725.2px;font-size:27.5px;color:#000;letter-spacing:0.75px;font-kerning:none;">0.0057644</div>
<div class="t" style="left:16.6px;top:766.2px;font-size:27.5px;color:#222;letter-spacing:1.41px;">33</div>
<div class="t" style="left:65.6px;top:766.2px;font-size:27.5px;color:#000;letter-spacing:-0.38px;">HUN</div>
<div class="t" style="left:278.4px;top:766.2px;font-size:27.5px;color:#000;letter-spacing:0.19px;">Hungary</div>
<div class="t" style="left:534.8px;top:766.2px;font-size:27.5px;color:#000;letter-spacing:0.76px;font-kerning:none;">9.684679</div>
<div class="t" style="left:686.0px;top:766.2px;font-size:27.5px;color:#000;letter-spacing:0.75px;font-kerning:none;">10.377137</div>
<div class="t" style="left:851.8px;top:766.2px;font-size:27.5px;color:#000;letter-spacing:0.74px;font-kerning:none;">0.22993101</div>
<div class="t" style="left:1034.0px;top:766.2px;font-size:27.5px;color:#000;letter-spacing:0.64px;font-kerning:none;">-0.002381</div>
<div class="t" style="left:16.6px;top:807.2px;font-size:27.5px;color:#222;letter-spacing:1.41px;">34</div>
<div class="t" style="left:65.6px;top:807.2px;font-size:27.5px;color:#000;transform:scaleX(0.862);transform-origin:0 0;">SVK</div>
<div class="t" style="left:278.4px;top:807.2px;font-size:27.5px;color:#000;letter-spacing:-0.37px;">Slovakia</div>
<div class="t" style="left:534.8px;top:807.2px;font-size:27.5px;color:#000;letter-spacing:0.76px;font-kerning:none;">5.457013</div>
<div class="t" style="left:702.0px;top:807.2px;font-size:27.5px;color:#000;letter-spacing:0.76px;font-kerning:none;">5.288454</div>
<div class="t" style="left:851.8px;top:807.2px;font-size:27.5px;color:#000;letter-spacing:0.74px;font-kerning:none;">0.22978061</div>
<div class="t" style="left:1027.0px;top:807.2px;font-size:27.5px;color:#000;letter-spacing:0.75px;font-kerning:none;">0.0010819</div>
<div class="t" style="left:16.6px;top:848.2px;font-size:27.5px;color:#222;letter-spacing:1.41px;">35</div>
<div class="t" style="left:65.6px;top:848.2px;font-size:27.5px;color:#000;transform:scaleX(0.931);transform-origin:0 0;">LVA</div>
<div class="t" style="left:278.4px;top:848.2px;font-size:27.5px;color:#000;letter-spacing:0.01px;">Latvia</div>
<div class="t" style="left:534.8px;top:848.2px;font-size:27.5px;color:#000;letter-spacing:0.76px;font-kerning:none;">1.906743</div>
<div class="t" style="left:702.0px;top:848.2px;font-size:27.5px;color:#000;letter-spacing:0.76px;font-kerning:none;">2.664439</div>
<div class="t" style="left:867.8px;top:848.2px;font-size:27.5px;color:#000;letter-spacing:0.75px;font-kerning:none;">0.2294674</div>
<div class="t" style="left:1034.0px;top:848.2px;font-size:27.5px;color:#000;letter-spacing:0.64px;font-kerning:none;">-0.011597</div>
</div></div>
<svg width="670" height="506" viewBox="493 349 670 506" style="left:493px;top:349px;overflow:hidden" fill="none" stroke="#fc0606" stroke-width="4.1">
<ellipse cx="574.5" cy="368.00" rx="88.7" ry="18.90"/>
<ellipse cx="574.5" cy="410.80" rx="90.9" ry="18.75"/>
<ellipse cx="574.5" cy="490.65" rx="90.5" ry="21.00"/>
<ellipse cx="574.5" cy="696.05" rx="90.2" ry="21.60"/>
<ellipse cx="574.5" cy="777.20" rx="90.2" ry="20.05"/>
<ellipse cx="574.5" cy="818.85" rx="90.2" ry="20.80"/>
<ellipse cx="574.5" cy="860.25" rx="90.2" ry="20.80"/>
</svg>
<div class="hl" style="left:61px;top:389px;width:1101px;background:#a0a0a0"></div>
<div class="a" style="left:825px;top:552px;width:184px;height:43px;border:2px solid #217346;box-sizing:border-box"></div>
<div class="a" style="left:1004px;top:590px;width:8px;height:8px;background:#fff"></div><div class="a" style="left:1005px;top:591px;width:6px;height:6px;background:#217346"></div>
<div class="a" style="left:1165px;top:334px;width:25px;height:498px;background:#d6d6d6"></div>
<div class="a" style="left:1165px;top:310px;width:25px;height:25px;background:#fff;border:1px solid #d0d0d0;box-sizing:border-box"></div>
<div class="a" style="left:1165px;top:595px;width:25px;height:129px;background:#fff;border:1px solid #d0d0d0;box-sizing:border-box"></div>
<div class="a" style="left:5px;top:855px;width:1188px;height:34px;background:#e6e6e6"></div>
<div class="a" style="left:5px;top:855px;width:1157px;height:1px;background:#ababab"></div>
<div class="a" style="left:1165px;top:831px;width:25px;height:25px;background:#fff;border:1px solid #d0d0d0;box-sizing:border-box"></div>
<div class="a" style="left:5px;top:888px;width:1188px;height:1px;background:#c6c6c6"></div>
<div class="a" style="left:123px;top:855px;width:140px;height:29px;background:#fff;border-bottom:2px solid #217346;border-left:1px solid #ababab;border-right:1px solid #ababab;box-sizing:content-box"></div>
<div class="t" style="left:134.6px;top:861.3px;font-size:18.6px;color:#217346;font-weight:700;letter-spacing:1.12px;">GrowthData</div>
<div class="t" style="left:274.6px;top:861.3px;font-size:18.6px;color:#444;letter-spacing:1.67px;">Info</div>
<div class="t" style="left:336.6px;top:861.3px;font-size:18.6px;color:#444;letter-spacing:0.77px;">Legend</div>
<div class="t" style="left:428.6px;top:861.3px;font-size:18.6px;color:#444;letter-spacing:1.21px;">Data</div>
<div class="t" style="left:500.6px;top:861.3px;font-size:18.6px;color:#444;letter-spacing:0.20px;">TaxRates</div>
<div class="t" style="left:611.8px;top:861.3px;font-size:18.6px;color:#444;width:17px;overflow:hidden;">Ta</div>
<div class="t" style="left:638.6px;top:861.3px;font-size:18.6px;color:#217346;font-weight:700;letter-spacing:1.21px;">...</div>
<div class="a" style="left:324px;top:859px;width:1px;height:24px;background:#ababab"></div>
<div class="a" style="left:416px;top:859px;width:1px;height:24px;background:#ababab"></div>
<div class="a" style="left:485px;top:859px;width:1px;height:24px;background:#ababab"></div>
<div class="a" style="left:594px;top:859px;width:1px;height:24px;background:#ababab"></div>
<div class="a" style="left:735px;top:859px;width:427px;height:25px;background:#d6d6d6"></div>
<div class="a" style="left:735px;top:859px;width:23px;height:25px;background:#fff;border:1px solid #d0d0d0;box-sizing:border-box"></div>
<div class="a" style="left:1138px;top:859px;width:24px;height:25px;background:#fff;border:1px solid #d0d0d0;box-sizing:border-box"></div>
<div class="a" style="left:1012px;top:859px;width:92px;height:25px;background:#fff;border:1px solid #d0d0d0;box-sizing:border-box"></div>
<div class="a" style="left:5px;top:889px;width:1188px;height:30px;background:#f3f3f3"></div>
<div class="a" style="left:732px;top:889px;width:58px;height:30px;background:#c8c8c8"></div>
<div class="t" style="left:15.9px;top:899.6px;font-size:14.9px;color:#555;letter-spacing:0.10px;">Ready</div>
<div class="t" style="left:1125.5px;top:899.6px;font-size:14.9px;color:#555;letter-spacing:0.55px;">140%</div>
<svg width="1194" height="919" style="left:0;top:0" fill="none" stroke="#444" stroke-width="1.4">
<path d="M1172,326 L1177.5,319.6 L1183,326 Z M1172,840.4 L1177.5,846.8 L1183,840.4 Z" fill="#777" stroke="none"/>
<path d="M750,865.4 V877.4 L743.4,871.4 Z M1147.4,865.4 V877.4 L1154,871.4 Z" fill="#6e6e6e" stroke="none"/>
<path d="M40.6,865.4 V876.6 L35,871 Z" fill="#c8c8c8" stroke="none"/><path d="M69.4,865.4 V876.6 L75,871 Z" fill="#217346" stroke="none"/>
<circle cx="681.2" cy="870.8" r="10.4" stroke="#777" stroke-width="1.3"/><path d="M675.6,870.8 H686.8 M681.2,865.2 V876.4" stroke="#666" stroke-width="1.4"/>
<path d="M720,863.6 h2.8 v2.8 h-2.8 z M720,869.8 h2.8 v2.8 h-2.8 z M720,876 h2.8 v2.8 h-2.8 z" fill="#b0b0b0" stroke="none"/>
<path d="M752.6,896.6 H769.4 V913.4 H752.6 Z M752.6,902.2 H769.4 M752.6,907.8 H769.4 M758.2,896.6 V913.4 M763.8,896.6 V913.4" stroke="#333" stroke-width="1.4"/>
<path d="M811.6,896.8 H829 V913.4 H811.6 Z" stroke-width="1.5"/><path d="M815.6,900.6 H825 V910.2 H815.6 Z M817.6,903.4 H823 M817.6,905.4 H823 M817.6,907.4 H823" stroke-width="1.1"/>
<path d="M871,896.8 H888.2 V913.4 H871 Z M876.4,896.8 V904.8 H883 V896.8 M871,904.8 H876.4" stroke-width="1.5"/>
<path d="M916.8,905 H928.6 M939,905 H1086 M1094.6,905 H1106.6 M1100.6,899 V911 M1013,900.6 V909.4" stroke="#666" stroke-width="1.4"/><rect x="1019.6" y="895.6" width="6.6" height="18.8" fill="#555" stroke="none"/>
</svg>
</body>
</html>
